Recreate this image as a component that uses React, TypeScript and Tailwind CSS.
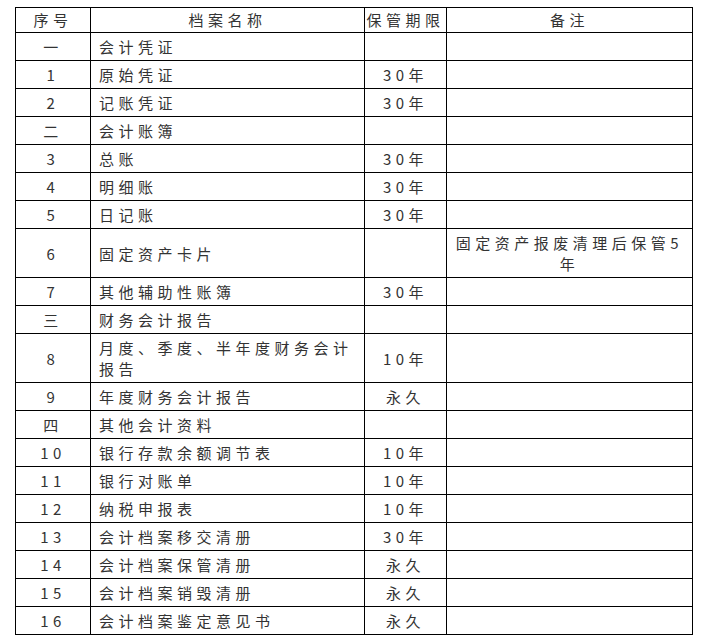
import React from "react";

type Row = { no: string; name: string; term?: string; note?: string };

const rows: Row[] = [
  { no: "一", name: "会计凭证" },
  { no: "1", name: "原始凭证", term: "30年" },
  { no: "2", name: "记账凭证", term: "30年" },
  { no: "二", name: "会计账簿" },
  { no: "3", name: "总账", term: "30年" },
  { no: "4", name: "明细账", term: "30年" },
  { no: "5", name: "日记账", term: "30年" },
  { no: "6", name: "固定资产卡片", note: "固定资产报废清理后保管5年" },
  { no: "7", name: "其他辅助性账簿", term: "30年" },
  { no: "三", name: "财务会计报告" },
  { no: "8", name: "月度、季度、半年度财务会计报告", term: "10年" },
  { no: "9", name: "年度财务会计报告", term: "永久" },
  { no: "四", name: "其他会计资料" },
  { no: "10", name: "银行存款余额调节表", term: "10年" },
  { no: "11", name: "银行对账单", term: "10年" },
  { no: "12", name: "纳税申报表", term: "10年" },
  { no: "13", name: "会计档案移交清册", term: "30年" },
  { no: "14", name: "会计档案保管清册", term: "永久" },
  { no: "15", name: "会计档案销毁清册", term: "永久" },
  { no: "16", name: "会计档案鉴定意见书", term: "永久" },
];

const cell = "border border-black py-[3px] align-middle";

export default function App() {
  return (
    <div className="min-h-[643px] w-[708px] bg-white pl-[15px] pt-[7px] font-['Noto_Sans_CJK_SC','Noto_Sans',sans-serif] text-[15px] leading-[21px] tracking-[4.5px] text-[#333]">
      <table className="w-[677px] table-fixed border-collapse">
        <colgroup>
          <col className="w-[75px]" />
          <col className="w-[274px]" />
          <col className="w-[82px]" />
          <col className="w-[246px]" />
        </colgroup>
        <thead>
          <tr>
            <th className="border border-black pt-px pb-[2px] text-center font-normal">序号</th>
            <th className="border border-black pt-px pb-[2px] text-center font-normal">档案名称</th>
            <th className="border border-black pt-px pb-[2px] text-center font-normal whitespace-nowrap">保管期限</th>
            <th className="border border-black pt-px pb-[2px] text-center font-normal">备注</th>
          </tr>
        </thead>
        <tbody>
          {rows.map((r) => (
            <tr key={r.no}>
              <td className={`${cell} text-center`}>{r.no}</td>
              <td className={`${cell} pl-2 pr-1 text-left`}>{r.name}</td>
              <td className={`${cell} text-center`}>{r.term}</td>
              <td className={`${cell} px-1.5 text-center`}>{r.note}</td>
            </tr>
          ))}
        </tbody>
      </table>
    </div>
  );
}
